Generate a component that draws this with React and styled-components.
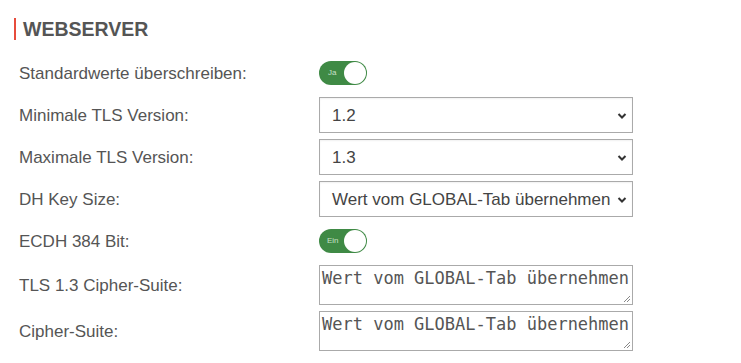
import React from "react";
import styled, { createGlobalStyle } from "styled-components";

const Global = createGlobalStyle`
  html, body { margin: 0; padding: 0; background: #fff; }
  body { font-family: "Liberation Sans", Arial, sans-serif; }
`;

const Page = styled.div`
  padding: 18px 0 0 14px;
  width: 741px;
  box-sizing: border-box;
`;

const Heading = styled.h2`
  margin: 0;
  border-left: 2px solid #e74c3c;
  padding-left: 7px;
  font-size: 19.5px;
  line-height: 22px;
  font-weight: bold;
  color: #555;
  height: 22px;
`;

const Form = styled.div`
  margin-top: 15px;
  padding-left: 5px;
  display: flex;
  flex-direction: column;
  gap: 6px;
`;

const Row = styled.div`
  display: grid;
  grid-template-columns: 300px 314px;
  align-items: center;
  min-height: 36px;
`;

const Label = styled.label`
  font-size: 17px;
  color: #555;
  padding-top: 2px;
`;

const Toggle = styled.div`
  position: relative;
  width: 48px;
  height: 24px;
  border-radius: 12px;
  background: #3f8a45;
  box-sizing: border-box;
`;

const ToggleText = styled.span`
  position: absolute;
  left: ${(p) => p.$left}px;
  top: 0;
  line-height: 24px;
  font-size: 8px;
  color: #c9e0c9;
`;

const Knob = styled.span`
  position: absolute;
  right: 1px;
  top: 1px;
  width: 22px;
  height: 22px;
  border-radius: 50%;
  background: #fff;
`;

const SelectWrap = styled.div`
  position: relative;
  height: 36px;
  border: 1px solid #aaa;
  box-sizing: border-box;
  background: #fff;
  box-shadow: inset 0 1px 2px rgba(0, 0, 0, 0.06);
  display: flex;
  align-items: center;
  padding: 1px 0 0 12px;
  font-size: 17px;
  color: #444;
`;

const Chevron = styled.svg`
  position: absolute;
  right: 5px;
  top: 14px;
`;

const TextArea = styled.div`
  position: relative;
  height: 40px;
  border: 1px solid #aaa;
  box-sizing: border-box;
  padding: 2px 0 0 2px;
  font-family: "DejaVu Sans Mono", "Liberation Mono", monospace;
  font-size: 17px;
  line-height: 20px;
  color: #555;
  white-space: nowrap;
  overflow: hidden;
`;

const Grip = styled.svg`
  position: absolute;
  right: 1px;
  bottom: 1px;
`;

function Select({ value }) {
  return (
    <SelectWrap>
      {value}
      <Chevron width="10" height="8" viewBox="0 0 10 8">
        <path d="M1.5 2 L5 5.5 L8.5 2" stroke="#333" strokeWidth="2" fill="none" />
      </Chevron>
    </SelectWrap>
  );
}

function Switch({ text, left }) {
  return (
    <Toggle>
      <ToggleText $left={left}>{text}</ToggleText>
      <Knob />
    </Toggle>
  );
}

function Area({ value }) {
  return (
    <TextArea>
      {value}
      <Grip width="8" height="8" viewBox="0 0 8 8">
        <path d="M7 1 L1 7 M7 4 L4 7" stroke="#888" strokeWidth="1" />
      </Grip>
    </TextArea>
  );
}

export default function App() {
  return (
    <>
      <Global />
      <Page>
        <Heading>WEBSERVER</Heading>
        <Form>
          <Row>
            <Label>Standardwerte überschreiben:</Label>
            <Switch text="Ja" left={9} />
          </Row>
          <Row>
            <Label>Minimale TLS Version:</Label>
            <Select value="1.2" />
          </Row>
          <Row>
            <Label>Maximale TLS Version:</Label>
            <Select value="1.3" />
          </Row>
          <Row>
            <Label>DH Key Size:</Label>
            <Select value="Wert vom GLOBAL-Tab übernehmen" />
          </Row>
          <Row>
            <Label>ECDH 384 Bit:</Label>
            <Switch text="Ein" left={8} />
          </Row>
          <Row>
            <Label>TLS 1.3 Cipher-Suite:</Label>
            <Area value="Wert vom GLOBAL-Tab übernehmen" />
          </Row>
          <Row>
            <Label>Cipher-Suite:</Label>
            <Area value="Wert vom GLOBAL-Tab übernehmen" />
          </Row>
        </Form>
      </Page>
    </>
  );
}
